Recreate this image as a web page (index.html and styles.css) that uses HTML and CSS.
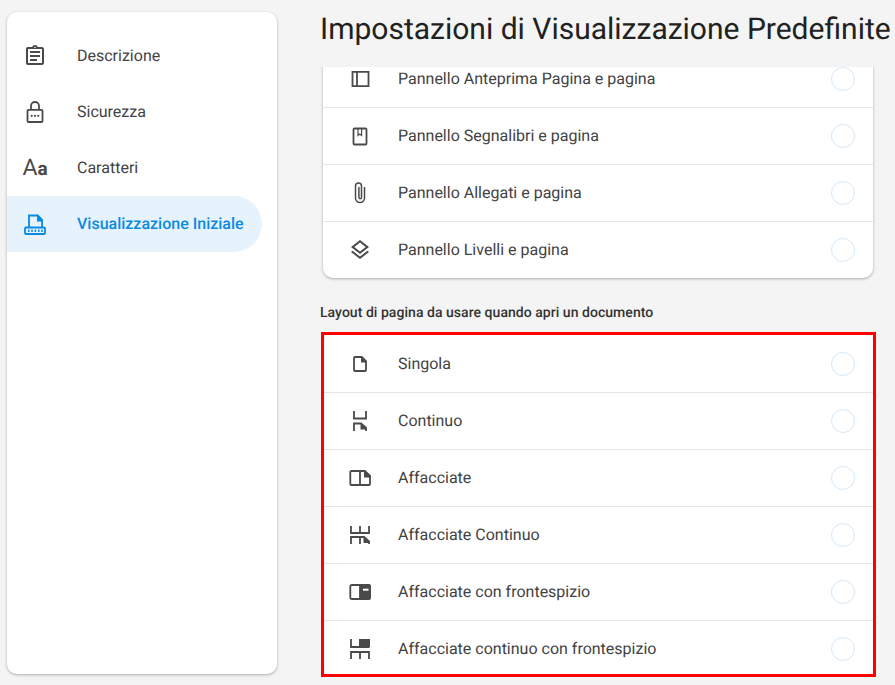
FILE: index.html
```html
<!DOCTYPE html>
<html lang="it">
<head>
<meta charset="utf-8">
<title>Impostazioni di Visualizzazione Predefinite</title>
<link rel="stylesheet" href="styles.css">
</head>
<body>
<div class="app">
  <nav class="sidebar">
    <a class="nav-item">
      <span class="nav-icon"><svg viewBox="0 0 24 24" width="24" height="24"><path class="fill" d="M7 15h7v2H7zm0-4h10v2H7zm0-4h10v2H7zm12-4h-4.180C14.400 1.840 13.300 1 12 1c-1.300 0-2.400.84-2.820 2H5c-.14 0-.27.01-.4.04-.39.08-.74.28-1.010.55-.18.18-.33.4-.43.64-.1.23-.16.49-.16.77v14c0 .27.06.54.16.78s.25.45.43.64c.27.27.62.47 1.010.55.13.02.26.03.4.03h14c1.100 0 2-.9 2-2V5c0-1.100-.9-2-2-2zm-7-.25c.41 0 .75.34.75.75s-.34.75-.75.75-.75-.34-.75-.75.34-.75.75-.75zM19 19H5V5h14v14z"/></svg></span>
      <span class="nav-label">Descrizione</span>
    </a>
    <a class="nav-item">
      <span class="nav-icon"><svg viewBox="0 0 24 24" width="24" height="24"><path class="line bold" d="M5.500 9.800h13a1 1 0 0 1 1 1V21a1 1 0 0 1-1 1h-13a1 1 0 0 1-1-1V10.800a1 1 0 0 1 1-1zM8 9.800V6a4 4 0 0 1 8 0v3.800"/><circle class="fill" cx="8.700" cy="15.800" r="1.100"/><circle class="fill" cx="12" cy="15.800" r="1.100"/><circle class="fill" cx="15.300" cy="15.800" r="1.100"/></svg></span>
      <span class="nav-label">Sicurezza</span>
    </a>
    <a class="nav-item">
      <span class="nav-icon aa"><span class="aa-big">A</span><span class="aa-small">a</span></span>
      <span class="nav-label">Caratteri</span>
    </a>
    <a class="nav-item active">
      <span class="nav-icon"><svg viewBox="0 0 24 24" width="24" height="24"><path class="line bold" d="M6 15V3.500h8.500L19 8v7"/><path class="fill" d="M14 2.500h1l5 5V9.500h-6z"/><path class="line bold" d="M2 16.500a1 1 0 0 1 1-1h18a1 1 0 0 1 1 1v4.500a1 1 0 0 1-1 1H3a1 1 0 0 1-1-1z"/><path class="fill" d="M5 17.500h1.500v2.500H5zm3.300 0h1.500v2.500H8.300zm3.400 0h1.500v2.500h-1.500zm3.300 0h1.500v2.500H15zm3.200 0h1.500v2.500h-1.500z"/></svg></span>
      <span class="nav-label">Visualizzazione Iniziale</span>
    </a>
  </nav>
  <main class="main">
    <h1 class="title">Impostazioni di Visualizzazione Predefinite</h1>
    <div class="scroll">
      <section class="card card-top">
        <div class="row">
          <span class="row-icon"><svg viewBox="0 0 24 24" width="24" height="24"><path class="line bold" d="M4.500 4.800h16v14.400h-16zM9 4.800v14.400"/></svg></span>
          <span class="row-label">Pannello Anteprima Pagina e pagina</span>
          <span class="radio"></span>
        </div>
        <div class="row">
          <span class="row-icon"><svg viewBox="0 0 24 24" width="24" height="24"><path class="line bold" d="M6.500 4.500h11a1 1 0 0 1 1 1v14a1 1 0 0 1-1 1h-11a1 1 0 0 1-1-1v-14a1 1 0 0 1 1-1z"/><path class="line thin" d="M10 4.500v7l1.800-1.500 1.800 1.500v-7"/></svg></span>
          <span class="row-label">Pannello Segnalibri e pagina</span>
          <span class="radio"></span>
        </div>
        <div class="row">
          <span class="row-icon"><svg viewBox="0 0 24 24" width="24" height="24"><path class="line" d="M16.500 6v11a4.500 4.500 0 0 1-9 0V5a3 3 0 0 1 6 0v11.500a1.300 1.300 0 0 1-2.600 0V6"/></svg></span>
          <span class="row-label">Pannello Allegati e pagina</span>
          <span class="radio"></span>
        </div>
        <div class="row">
          <span class="row-icon"><svg viewBox="0 0 24 24" width="24" height="24"><path class="fill" d="M11.990 18.540l-7.370-5.730L3 14.070l9 7 9-7-1.630-1.270-7.380 5.740zM12 16l7.360-5.730L21 9l-9-7-9 7 1.630 1.270L12 16zm0-11.470L17.740 9 12 13.470 6.260 9 12 4.530z"/></svg></span>
          <span class="row-label">Pannello Livelli e pagina</span>
          <span class="radio"></span>
        </div>
      </section>
      <h2 class="section-label">Layout di pagina da usare quando apri un documento</h2>
      <section class="highlight">
        <div class="card card-layout">
          <div class="row">
            <span class="row-icon"><svg viewBox="0 0 24 24" width="24" height="24"><path class="line bold" d="M7 5h6.500l4.500 4.500V18a1 1 0 0 1-1 1H7a1 1 0 0 1-1-1V6a1 1 0 0 1 1-1z"/><path class="fill" d="M13 4h1l5 5v1.500h-6z"/></svg></span>
            <span class="row-label">Singola</span>
            <span class="radio"></span>
          </div>
          <div class="row">
            <span class="row-icon"><svg viewBox="0 0 24 24" width="24" height="24"><path class="line bold" d="M6 2v7.500h12V2M6 22v-7.500h7l5 4.500v3"/><path class="fill" d="M12.500 14h1l5.500 5v1.500h-6.500z"/></svg></span>
            <span class="row-label">Continuo</span>
            <span class="radio"></span>
          </div>
          <div class="row">
            <span class="row-icon"><svg viewBox="0 0 24 24" width="24" height="24"><path class="line bold" d="M3.300 5H16.500l5.500 5v8a1 1 0 0 1-1 1H3.300a1 1 0 0 1-1-1V6a1 1 0 0 1 1-1zM12 5v14"/><path class="fill" d="M16 4h1l6 6v1.500h-7z"/></svg></span>
            <span class="row-label">Affacciate</span>
            <span class="radio"></span>
          </div>
          <div class="row">
            <span class="row-icon"><svg viewBox="0 0 24 24" width="24" height="24"><path class="line bold" d="M3 3v7h18V3M12 3v7M3 21v-7h13l5 4.500V21M12 14v7"/><path class="fill" d="M15.500 13.500h1l5.500 5V20h-6.500z"/></svg></span>
            <span class="row-label">Affacciate Continuo</span>
            <span class="radio"></span>
          </div>
          <div class="row">
            <span class="row-icon"><svg viewBox="0 0 24 24" width="24" height="24"><path class="fill" d="M12 4h9a2 2 0 0 1 2 2v12a2 2 0 0 1-2 2h-9z"/><path class="line bold" d="M3.800 5H12v14H3.800a1.500 1.500 0 0 1-1.500-1.500v-11A1.500 1.500 0 0 1 3.800 5z"/><path class="cut" d="M15 8.700h5.500v2H15z"/></svg></span>
            <span class="row-label">Affacciate con frontespizio</span>
            <span class="radio"></span>
          </div>
          <div class="row">
            <span class="row-icon"><svg viewBox="0 0 24 24" width="24" height="24"><path class="line bold" d="M3 2v8h18M12 15v7M3 22v-7h18v7"/><path class="fill" d="M11 2h11v8.500H11z"/></svg></span>
            <span class="row-label">Affacciate continuo con frontespizio</span>
            <span class="radio"></span>
          </div>
        </div>
      </section>
    </div>
  </main>
</div>
</body>
</html>
```
FILE: styles.css
```css
* { box-sizing: border-box; }
html, body { margin: 0; height: 100%; }
body {
  background: #f4f4f4;
  color: #424242;
  font-family: Roboto, "Liberation Sans", sans-serif;
  text-rendering: geometricPrecision;
  overflow: hidden;
}
.app { display: flex; height: 685px; overflow: hidden; }

.sidebar {
  flex: none;
  width: 270px;
  height: 662px;
  margin: 12px 0 0 7px;
  padding-top: 16px;
  padding-right: 15px;
  background: #fff;
  border-radius: 10px;
  box-shadow: 0 1px 3px rgba(0, 0, 0, .3);
}
.nav-item {
  display: flex;
  align-items: center;
  height: 56px;
  padding-left: 16px;
  font-size: 16px;
}
.nav-item.active {
  color: #0b8ae2;
  background: #e6f3fd;
  border-radius: 0 28px 28px 0;
  font-weight: 500;
}
.nav-label { padding-bottom: 2px; }
.nav-icon { display: flex; flex: none; width: 24px; margin-right: 30px; justify-content: center; color: #4a4a4a; }
.active .nav-icon { color: inherit; }
.nav-item svg, .row-icon svg { display: block; }
.aa { align-items: baseline; line-height: 24px; white-space: nowrap; }
.aa-big { font-size: 23px; font-weight: 400; }
.aa-small { font-size: 19px; font-weight: 700; }

.fill { fill: currentColor; }
.line { fill: none; stroke: currentColor; stroke-width: 1.500; }
.line.bold { stroke-width: 1.800; }
.line.thin { stroke-width: 1.200; }
.cut { fill: #fff; }

.main { flex: none; width: 618px; padding-left: 43px; display: flex; flex-direction: column; height: 685px; }
.title {
  flex: none;
  height: 67px;
  margin: 0;
  font-size: 30px;
  font-weight: 400;
  line-height: 34px;
  padding-top: 13px;
  color: #212121;
  white-space: nowrap;
  position: relative;
  z-index: 1;
  background: #f4f4f4;
}
.scroll { flex: 1; min-height: 0; overflow: hidden; padding-left: 3px; }

.card { background: #fff; border-radius: 10px; }
.card-top {
  width: 550px;
  height: 227px;
  margin-top: -16px;
  box-shadow: 0 1px 3px rgba(0, 0, 0, .3);
}
.section-label {
  margin: 26px 0 0 -3px;
  height: 28px;
  font-size: 14px;
  font-weight: 500;
  line-height: 18px;
  letter-spacing: .04px;
  color: #333;
  white-space: nowrap;
}
.highlight {
  width: 555px;
  height: 345px;
  margin-left: -2px;
  border: 3px solid #f00;
}
.card-layout { height: 339px; padding-top: 1px; border-radius: 6px; }

.row {
  display: flex;
  align-items: center;
  height: 57px;
  padding: 0 18px 0 25px;
  border-bottom: 1px solid #e5e5e5;
}
.row:last-child { height: 56px; border-bottom: 0; }
.card-layout .row { padding-left: 24px; }
.row-icon { flex: none; width: 24px; margin-right: 26px; color: #4a4a4a; }
.row-label { flex: 1; font-size: 16px; padding-bottom: 2px; }
.radio {
  flex: none;
  width: 24px;
  height: 24px;
  border: 1px solid #d3e8f8;
  border-radius: 50%;
}
```
